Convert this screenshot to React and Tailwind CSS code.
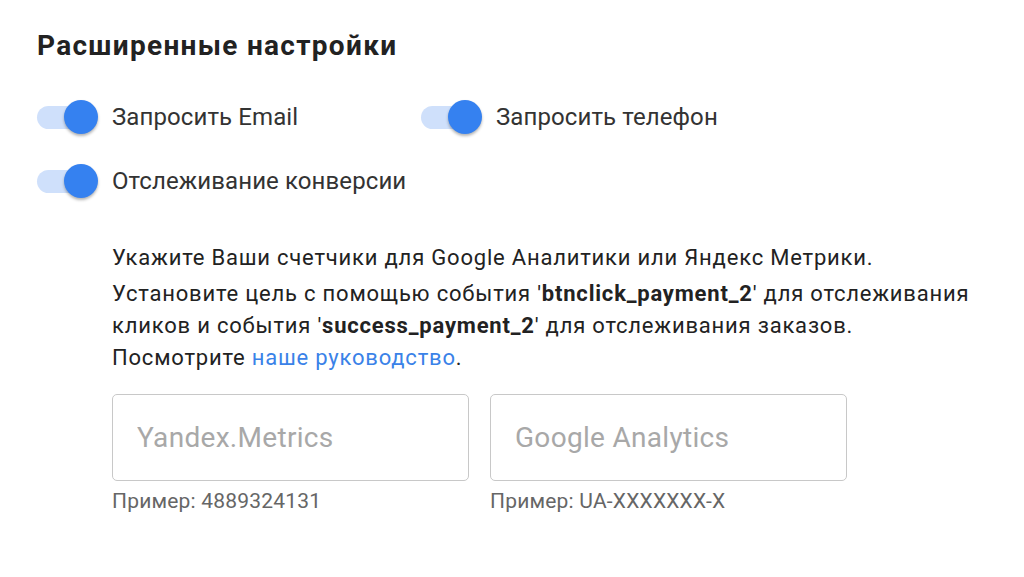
import React, { useState } from 'react';

const Toggle = ({ checked, onChange, label }) => (
  <label className="flex items-center cursor-pointer select-none">
    <span className="relative w-[61px] h-[34px] flex items-center">
      <span className={`ml-0 w-[56px] h-[23px] rounded-full ${checked ? 'bg-[#cfe0fb]' : 'bg-[#d6d6d6]'}`} />
      <span
        className={`absolute top-0 w-[34px] h-[34px] rounded-full shadow-[0_2px_3px_rgba(0,0,0,0.3)] ${
          checked ? 'left-[27px] bg-[#3581f0]' : 'left-0 bg-[#fafafa]'
        }`}
      />
    </span>
    <input type="checkbox" className="hidden" checked={checked} onChange={onChange} />
    <span className="ml-[14px] text-[24px] leading-[30px] text-[#333] tracking-[0.1px]">{label}</span>
  </label>
);

const Field = ({ placeholder, hint }) => (
  <div className="w-[357px]">
    <input
      placeholder={placeholder}
      className="w-full h-[87px] border border-[#c8c8c8] rounded-[5px] px-[24px] text-[28px] tracking-[0.3px] text-[#333] placeholder:text-[#a8a8a8] outline-none"
    />
    <p className="mt-[8px] text-[21px] tracking-[0.2px] text-[#666] leading-[24px]">{hint}</p>
  </div>
);

export default function App() {
  const [email, setEmail] = useState(true);
  const [phone, setPhone] = useState(true);
  const [conv, setConv] = useState(true);

  return (
    <div className="min-h-[577px] bg-white font-['Roboto',sans-serif] pl-[37px] pt-[28px]">
      <h1 className="text-[28px] font-bold text-[#222] leading-[36px] tracking-[1.3px]">Расширенные настройки</h1>

      {/* Toggles */}
      <div className="mt-[36px] flex">
        <div className="w-[384px]">
          <Toggle checked={email} onChange={() => setEmail(!email)} label="Запросить Email" />
        </div>
        <Toggle checked={phone} onChange={() => setPhone(!phone)} label="Запросить телефон" />
      </div>
      <div className="mt-[30px]">
        <Toggle checked={conv} onChange={() => setConv(!conv)} label="Отслеживание конверсии" />
      </div>

      {/* Conversion settings */}
      <div className="ml-[75px] mt-[44px] w-[880px]">
        <div className="text-[22px] leading-[32px] tracking-[0.8px] text-[#222]">
          <p className="mb-[4px]">Укажите Ваши счетчики для Google Аналитики или Яндекс Метрики.</p>
          <p>
            Установите цель с помощью события '<b>btnclick_payment_2</b>' для отслеживания кликов и события '
            <b>success_payment_2</b>' для отслеживания заказов.
          </p>
          <p>
            Посмотрите <a href="#" className="text-[#3a82e8]">наше руководство</a>.
          </p>
        </div>

        <div className="mt-[20px] flex gap-[21px]">
          <Field placeholder="Yandex.Metrics" hint="Пример: 4889324131" />
          <Field placeholder="Google Analytics" hint="Пример: UA-XXXXXXX-X" />
        </div>
      </div>
    </div>
  );
}
